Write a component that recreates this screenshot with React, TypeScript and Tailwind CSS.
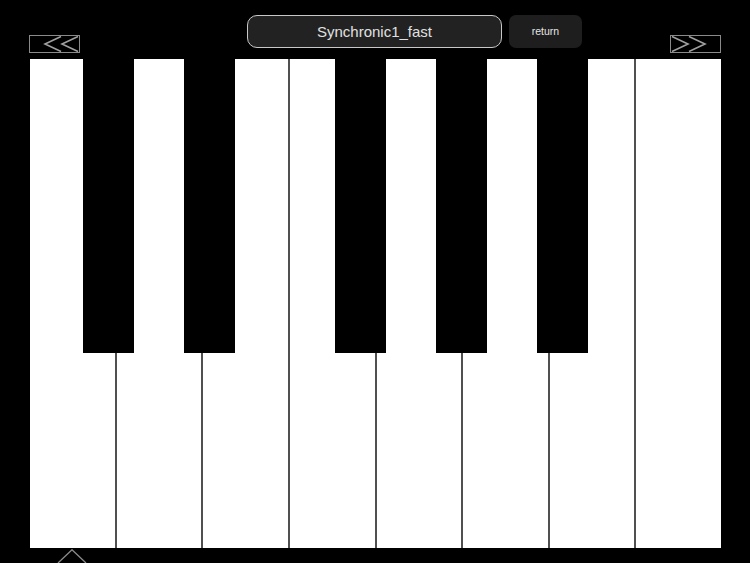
import React from "react"

const whiteKeys = ["C", "D", "E", "F", "G", "A", "B", "C2"]
// left offsets of the black keys, relative to the keyboard
const blackKeys = [53, 154, 305, 406, 507]

function ArrowBox({ dir }: { dir: "left" | "right" }) {
  return (
    <div className="mt-[35px] w-[51px] h-[18px] border border-[#8a8a8a]">
      <svg width="49" height="16" viewBox="0 0 49 16" className="block">
        {dir === "left" ? (
          <g fill="none" stroke="#a0a0a0" strokeWidth="1.6">
            <polyline points="31,0.5 15,8 31,15.5" />
            <polyline points="48,0.5 32,8 48,15.5" />
          </g>
        ) : (
          <g fill="none" stroke="#a0a0a0" strokeWidth="1.6">
            <polyline points="1,0.5 17,8 1,15.5" />
            <polyline points="18,0.5 34,8 18,15.5" />
          </g>
        )}
      </svg>
    </div>
  )
}

export default function App() {
  return (
    <div
      className="w-[750px] h-[563px] bg-black overflow-hidden flex flex-col"
      style={{ fontFamily: '"Liberation Sans", Arial, sans-serif' }}
    >
      {/* Top bar */}
      <div className="flex items-start h-[59px] pl-[29px] shrink-0">
        <ArrowBox dir="left" />
        <div className="ml-[167px] mt-[15px] w-[255px] h-[33px] rounded-[10px] border-[1.5px] border-[#c8c8c8] bg-[#222222] flex items-center justify-center pt-px text-[15px] text-[#e0e0e0]">
          Synchronic1_fast
        </div>
        <div className="ml-[7px] mt-[15px] w-[73px] h-[33px] rounded-[7px] bg-[#1e1e1e] flex items-center justify-center pt-px text-[10.5px] text-[#e6e6e6]">
          return
        </div>
        <div className="ml-[88px]">
          <ArrowBox dir="right" />
        </div>
      </div>

      {/* Keyboard */}
      <div className="relative ml-[30px] w-[691px] h-[489px] flex bg-white shrink-0">
        {whiteKeys.map((k, i) => (
          <div
            key={k}
            className={`flex-1 h-full bg-white ${i > 0 ? "border-l-2 border-[#505050]" : ""}`}
          />
        ))}
        {blackKeys.map((left) => (
          <div
            key={left}
            className="absolute top-0 w-[51px] h-[294px] bg-black"
            style={{ left }}
          />
        ))}
      </div>

      {/* Octave marker */}
      <svg width="32" height="15" viewBox="0 0 32 15" className="ml-[56px] mt-px block">
        <polyline points="1,15 16,0.8 31,15" fill="none" stroke="#8a8a8a" strokeWidth="1.4" />
      </svg>
    </div>
  )
}
